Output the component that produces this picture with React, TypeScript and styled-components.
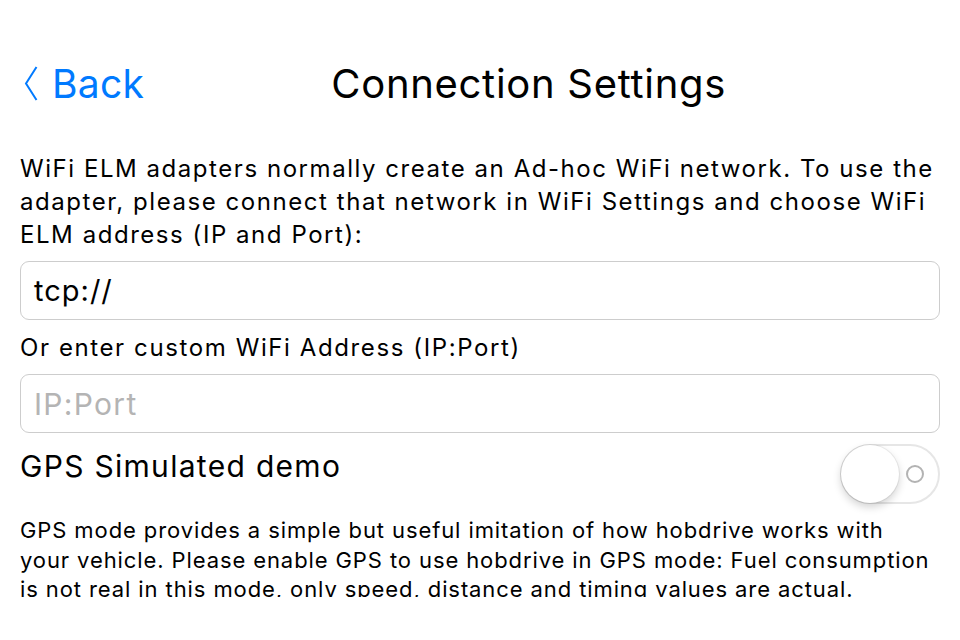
import React from 'react';
import styled, { createGlobalStyle } from 'styled-components';

const GlobalStyle = createGlobalStyle`
  html, body {
    margin: 0;
    padding: 0;
    background: #fff;
  }
  body {
    font-family: Inter, "Noto Sans", "Liberation Sans", sans-serif;
    color: #000;
  }
`;

const Screen = styled.div`
  width: 960px;
  height: 640px;
  overflow: hidden;
  background: #fff;
  padding: 0 20px;
  box-sizing: border-box;
`;

const NavBar = styled.header`
  display: flex;
  align-items: center;
  height: 90px;
  margin-top: 38px;
  margin-bottom: 24px;
`;

const BackButton = styled.button`
  display: flex;
  align-items: center;
  gap: 14px;
  background: transparent;
  border: none;
  padding: 0 0 0 4px;
  color: #007aff;
  font-family: inherit;
  font-size: 39px;
  letter-spacing: 0.3px;
  cursor: pointer;
`;

const Title = styled.h1`
  flex: 1;
  margin: 0;
  padding-right: 27px;
  text-align: center;
  font-size: 40px;
  font-weight: 400;
  letter-spacing: 0.7px;
`;

const Paragraph = styled.p<{ $size: number; $line: number; $track: number }>`
  margin: 0;
  font-size: ${p => p.$size}px;
  line-height: ${p => p.$line}px;
  letter-spacing: ${p => p.$track}px;
  white-space: nowrap;
`;

const Field = styled.div`
  display: flex;
  align-items: center;
  height: 59px;
  box-sizing: border-box;
  border: 1px solid #cdcdcd;
  border-radius: 9px;
  padding: 0 13px;
  font-size: 29px;
  letter-spacing: 1px;
  margin: 10px 0 11px;
`;

const Placeholder = styled.span`
  color: #b4b4b4;
  font-size: 30px;
  letter-spacing: 1.3px;
`;

const ToggleRow = styled.div`
  display: flex;
  justify-content: space-between;
  align-items: flex-start;
  height: 60px;
  margin-bottom: 12px;
`;

const ToggleLabel = styled.span`
  font-size: 30px;
  line-height: 36px;
  letter-spacing: 1.3px;
  margin-top: 4px;
`;

const Track = styled.div`
  position: relative;
  width: 100px;
  height: 60px;
  box-sizing: border-box;
  border: 2px solid #e6e6e6;
  border-radius: 30px;
  background: #fff;
  display: flex;
  align-items: center;
  justify-content: flex-end;
  padding-right: 14px;
`;

const OffMark = styled.span`
  width: 18px;
  height: 18px;
  box-sizing: border-box;
  border: 2px solid #b3b3b3;
  border-radius: 50%;
`;

const Knob = styled.span`
  position: absolute;
  left: -1px;
  top: -1px;
  width: 58px;
  height: 58px;
  border-radius: 50%;
  background: #fff;
  box-shadow: 0 4px 8px rgba(0, 0, 0, 0.18), 0 0 0 1px rgba(0, 0, 0, 0.06);
`;

const Footnote = styled.div`
  height: 81px;
  overflow: hidden;
`;

const Chevron = () => (
  <svg width="14" height="35" viewBox="0 0 14 35" fill="none">
    <path d="M12.5 1 L2 17.5 L12.5 34" stroke="#007aff" strokeWidth="2" />
  </svg>
);

export default function App() {
  return (
    <>
      <GlobalStyle />
      <Screen>
        <NavBar>
          <BackButton>
            <Chevron />
            <span>Back</span>
          </BackButton>
          <Title>Connection Settings</Title>
        </NavBar>

        <Paragraph $size={24} $line={33} $track={1.55}>
          WiFi ELM adapters normally create an Ad-hoc WiFi network. To use the
          <br />
          adapter, please connect that network in WiFi Settings and choose WiFi
          <br />
          ELM address (IP and Port):
        </Paragraph>

        <Field>tcp://</Field>

        <Paragraph $size={24} $line={33} $track={1.6}>
          Or enter custom WiFi Address (IP:Port)
        </Paragraph>

        <Field>
          <Placeholder>IP:Port</Placeholder>
        </Field>

        <ToggleRow>
          <ToggleLabel>GPS Simulated demo</ToggleLabel>
          <Track>
            <Knob />
            <OffMark />
          </Track>
        </ToggleRow>

        <Footnote>
          <Paragraph $size={22} $line={29.5} $track={0.9}>
            GPS mode provides a simple but useful imitation of how hobdrive works with
            <br />
            your vehicle. Please enable GPS to use hobdrive in GPS mode: Fuel consumption
            <br />
            is not real in this mode, only speed, distance and timing values are actual.
          </Paragraph>
        </Footnote>
      </Screen>
    </>
  );
}
